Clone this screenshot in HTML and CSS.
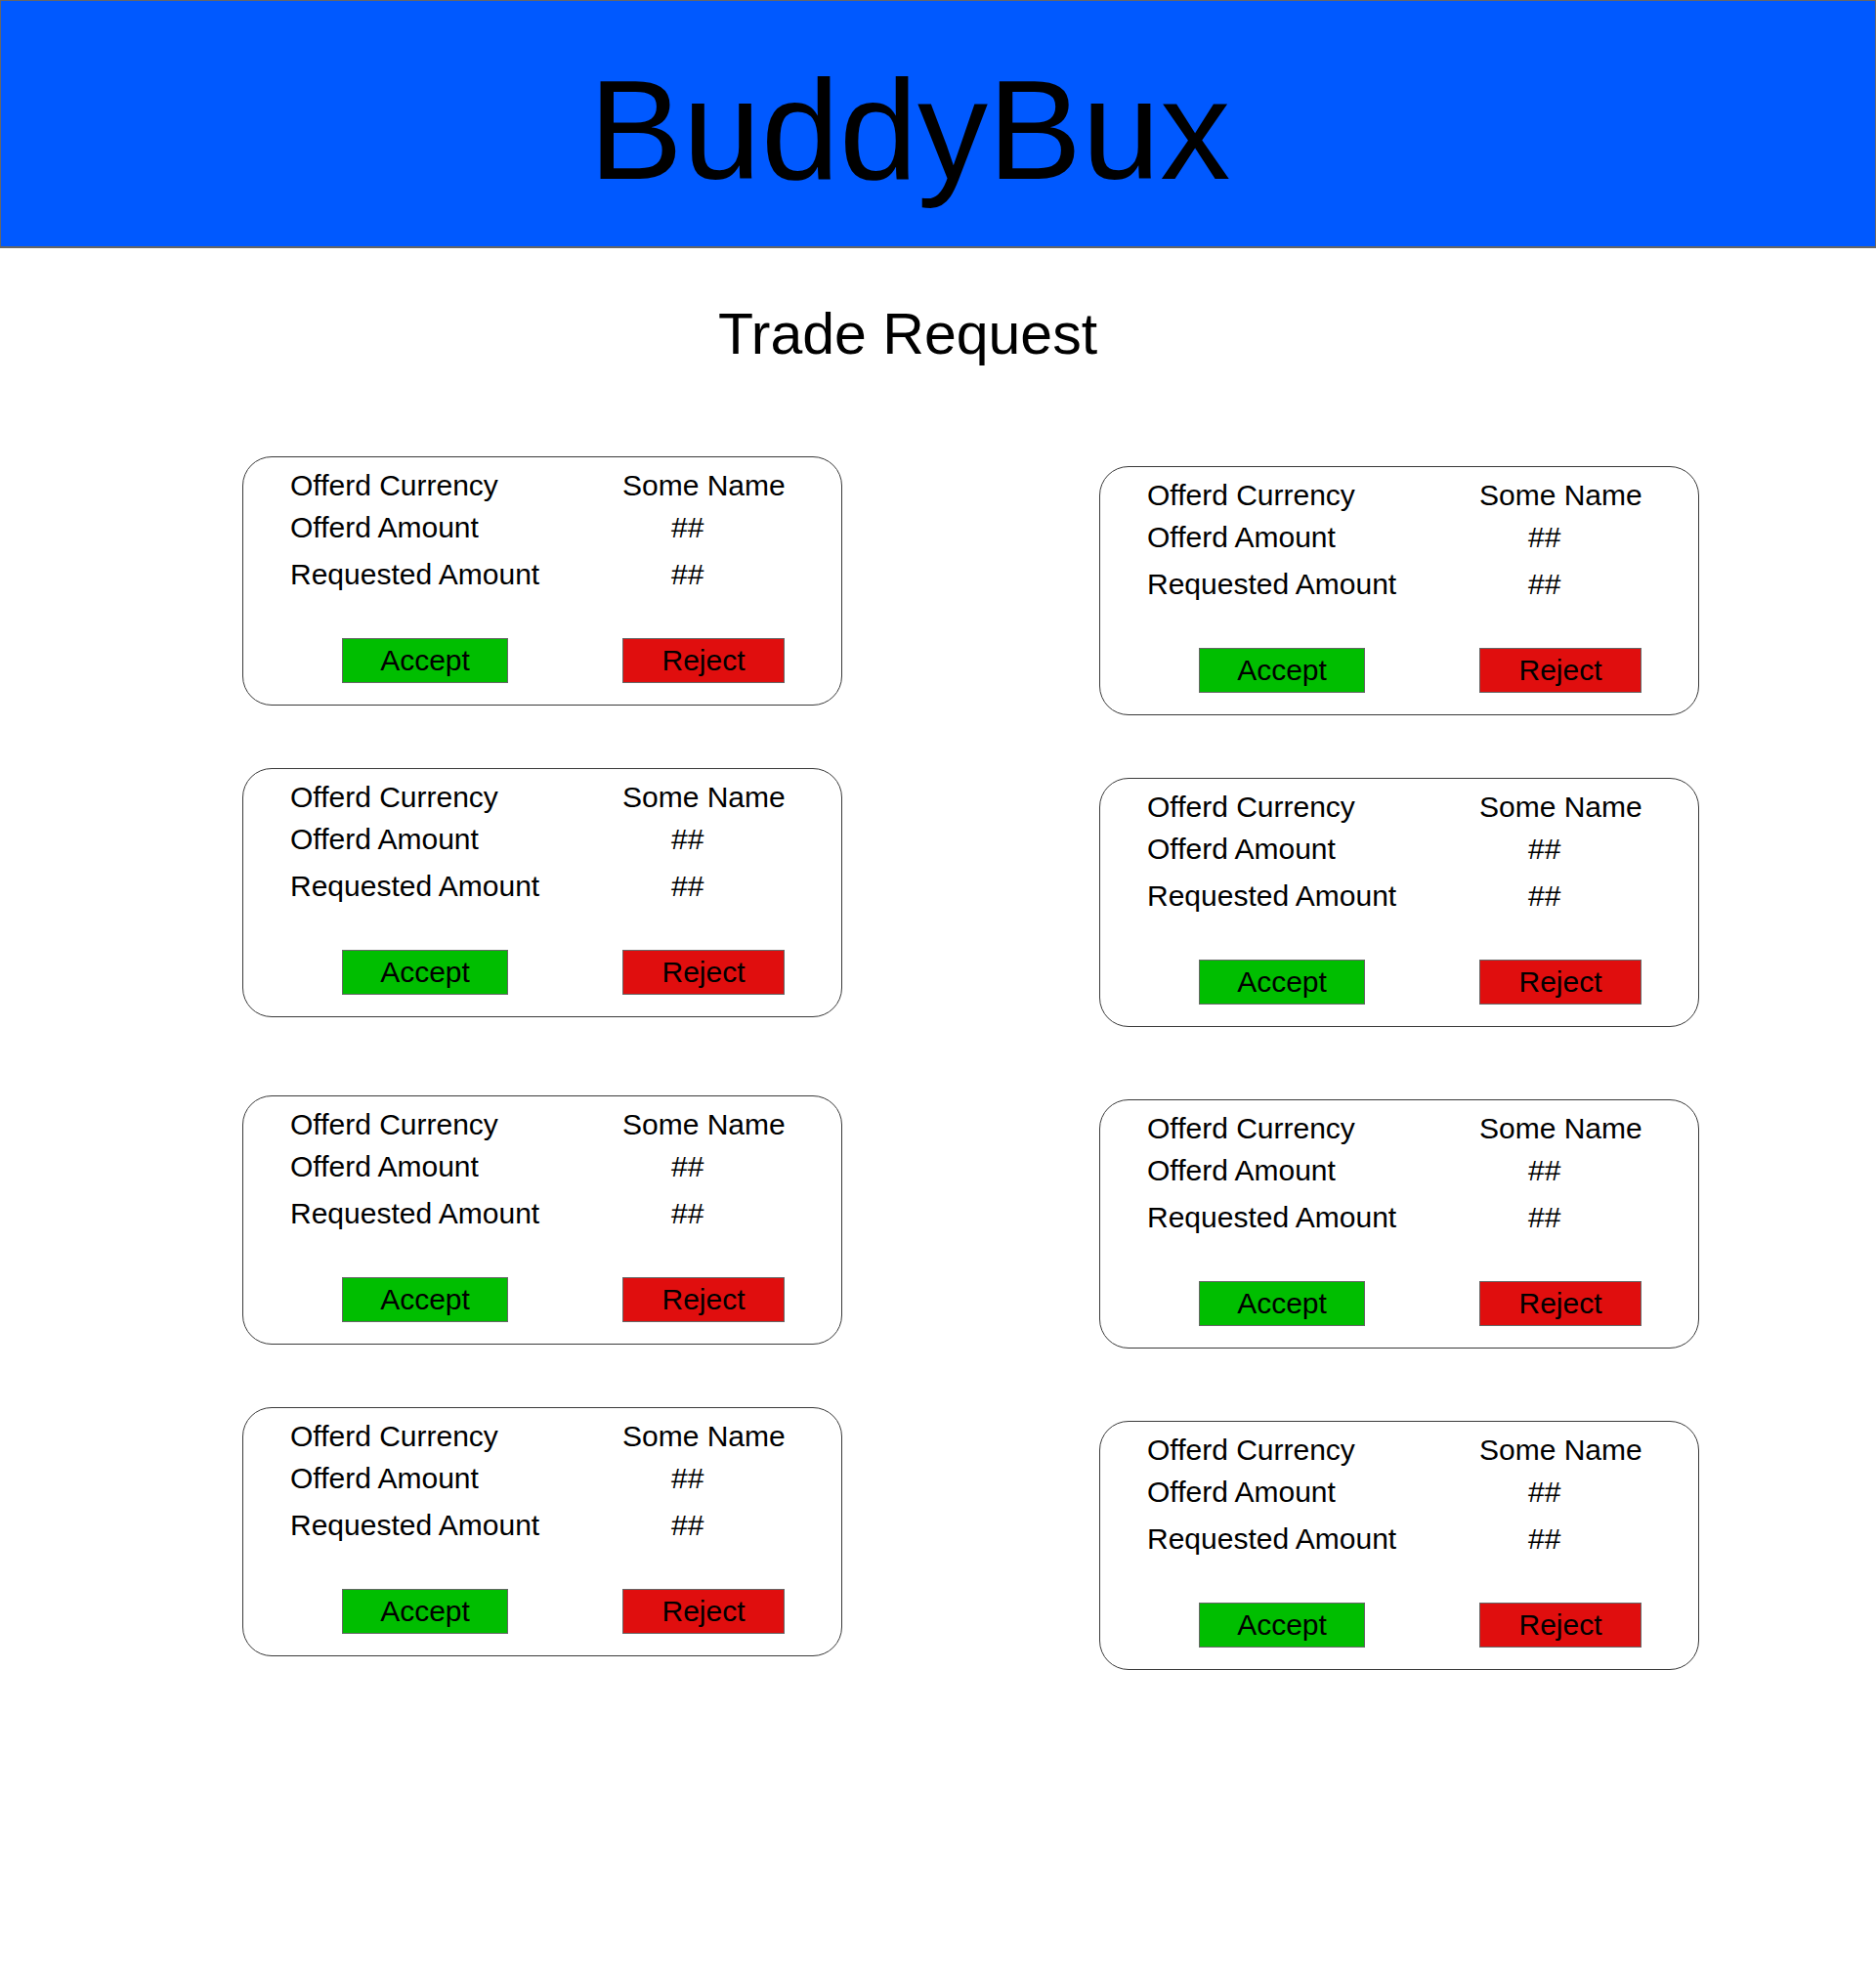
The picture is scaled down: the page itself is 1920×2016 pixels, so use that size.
FILE: index.html
```html
<!DOCTYPE html>
<html>
<head>
<meta charset="utf-8">
<title>BuddyBux</title>
<link rel="stylesheet" href="styles.css">
</head>
<body>
<header class="topbar"><h1 class="brand">BuddyBux</h1></header>
<h2 class="page-title">Trade Request</h2>
<main class="columns">
  <section class="col col-left">
    <div class="card">
      <div class="row r1"><span class="label">Offerd Currency</span><span class="value">Some Name</span></div>
      <div class="row r2"><span class="label">Offerd Amount</span><span class="value num">##</span></div>
      <div class="row r3"><span class="label">Requested Amount</span><span class="value num">##</span></div>
      <div class="actions"><button class="btn accept">Accept</button><button class="btn reject">Reject</button></div>
    </div>
    <div class="card">
      <div class="row r1"><span class="label">Offerd Currency</span><span class="value">Some Name</span></div>
      <div class="row r2"><span class="label">Offerd Amount</span><span class="value num">##</span></div>
      <div class="row r3"><span class="label">Requested Amount</span><span class="value num">##</span></div>
      <div class="actions"><button class="btn accept">Accept</button><button class="btn reject">Reject</button></div>
    </div>
    <div class="card wide-gap">
      <div class="row r1"><span class="label">Offerd Currency</span><span class="value">Some Name</span></div>
      <div class="row r2"><span class="label">Offerd Amount</span><span class="value num">##</span></div>
      <div class="row r3"><span class="label">Requested Amount</span><span class="value num">##</span></div>
      <div class="actions"><button class="btn accept">Accept</button><button class="btn reject">Reject</button></div>
    </div>
    <div class="card">
      <div class="row r1"><span class="label">Offerd Currency</span><span class="value">Some Name</span></div>
      <div class="row r2"><span class="label">Offerd Amount</span><span class="value num">##</span></div>
      <div class="row r3"><span class="label">Requested Amount</span><span class="value num">##</span></div>
      <div class="actions"><button class="btn accept">Accept</button><button class="btn reject">Reject</button></div>
    </div>
  </section>
  <section class="col col-right">
    <div class="card">
      <div class="row r1"><span class="label">Offerd Currency</span><span class="value">Some Name</span></div>
      <div class="row r2"><span class="label">Offerd Amount</span><span class="value num">##</span></div>
      <div class="row r3"><span class="label">Requested Amount</span><span class="value num">##</span></div>
      <div class="actions"><button class="btn accept">Accept</button><button class="btn reject">Reject</button></div>
    </div>
    <div class="card">
      <div class="row r1"><span class="label">Offerd Currency</span><span class="value">Some Name</span></div>
      <div class="row r2"><span class="label">Offerd Amount</span><span class="value num">##</span></div>
      <div class="row r3"><span class="label">Requested Amount</span><span class="value num">##</span></div>
      <div class="actions"><button class="btn accept">Accept</button><button class="btn reject">Reject</button></div>
    </div>
    <div class="card mid-gap">
      <div class="row r1"><span class="label">Offerd Currency</span><span class="value">Some Name</span></div>
      <div class="row r2"><span class="label">Offerd Amount</span><span class="value num">##</span></div>
      <div class="row r3"><span class="label">Requested Amount</span><span class="value num">##</span></div>
      <div class="actions"><button class="btn accept">Accept</button><button class="btn reject">Reject</button></div>
    </div>
    <div class="card mid-gap">
      <div class="row r1"><span class="label">Offerd Currency</span><span class="value">Some Name</span></div>
      <div class="row r2"><span class="label">Offerd Amount</span><span class="value num">##</span></div>
      <div class="row r3"><span class="label">Requested Amount</span><span class="value num">##</span></div>
      <div class="actions"><button class="btn accept">Accept</button><button class="btn reject">Reject</button></div>
    </div>
  </section>
</main>
</body>
</html>
```
FILE: styles.css
```css
* { box-sizing: border-box; }
html, body { margin: 0; padding: 0; background: #fff; }
body {
  font-family: "Liberation Sans", Arial, sans-serif;
  color: #000;
  width: 1920px;
  min-height: 2016px;
}
.topbar {
  height: 254px;
  background: #0059ff;
  border: 1px solid #666;
  border-bottom-width: 2px;
  padding-top: 61px;
  padding-right: 58px;
  text-align: center;
}
.brand {
  margin: 0;
  font-weight: normal;
  font-size: 144px;
  line-height: 144px;
}
.page-title {
  margin: 59px 0 0;
  padding-right: 62px;
  text-align: center;
  font-weight: normal;
  font-size: 59px;
  line-height: 59px;
}
.columns {
  display: flex;
  gap: 263px;
  padding-left: 248px;
  margin-top: 95px;
}
.col {
  display: flex;
  flex-direction: column;
  gap: 64px;
  width: 614px;
}
.col-right { padding-top: 10px; }
.card.wide-gap { margin-top: 16px; }
.card.mid-gap { margin-top: 10px; }
.card {
  height: 255px;
  border: 1px solid #3a3a3a;
  border-radius: 30px;
  padding-top: 12px;
}
.row {
  display: grid;
  grid-template-columns: 340px 1fr;
  padding-left: 48px;
  font-size: 30px;
  line-height: 34px;
}
.r2 { margin-top: 9px; }
.r3 { margin-top: 14px; }
.num { padding-left: 50px; }
.actions {
  display: flex;
  margin-top: 48px;
  padding-left: 101px;
}
.btn {
  height: 46px;
  border: 1px solid #666;
  font-family: "Liberation Sans", Arial, sans-serif;
  font-size: 30px;
  line-height: 44px;
  color: #000;
  padding: 0;
  text-align: center;
}
.accept { width: 170px; background: #00be00; }
.reject { width: 166px; margin-left: 117px; background: #e00e0e; }
```
